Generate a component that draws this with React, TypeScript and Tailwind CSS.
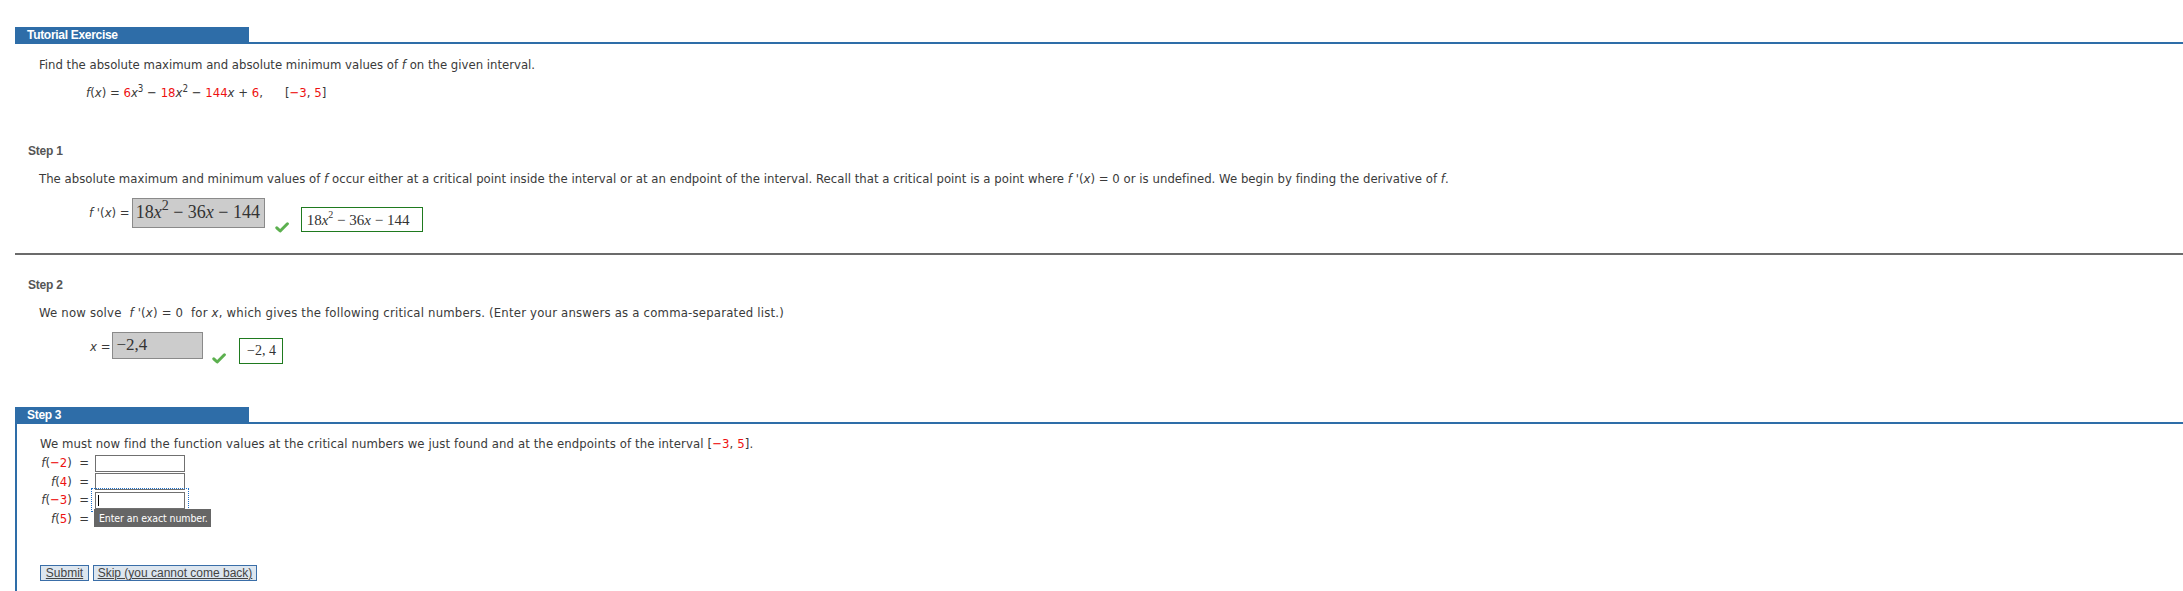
import React from "react";

const F = "font-[family-name:DejaVu_Sans_Condensed,DejaVu_Sans,sans-serif]";
const A = "font-[family-name:Liberation_Sans,Arial,sans-serif]";
const S = "font-[family-name:Liberation_Serif,Times_New_Roman,serif]";

function R({ children }: { children: React.ReactNode }) {
  return <span className="text-[#ee1111]">{children}</span>;
}

function Check() {
  return (
    <svg width="14" height="11" viewBox="0 0 14 11">
      <path
        d="M1.8 5.8 L5.2 9 L12.4 1.8"
        fill="none"
        stroke="#5cb04f"
        strokeWidth="3"
        strokeLinecap="round"
        strokeLinejoin="round"
      />
    </svg>
  );
}

function Header({ title }: { title: string }) {
  return (
    <div className="border-b-2 border-[#2e6da8]">
      <div
        className={`h-[15px] w-[234px] bg-[#2e6da8] pl-[12px] text-[12px] leading-[16px] font-bold tracking-[-0.3px] text-white ${A}`}
      >
        {title}
      </div>
    </div>
  );
}

function StepLabel({ children }: { children: React.ReactNode }) {
  return (
    <div className={`pl-[13px] text-[12px] leading-[16px] font-bold text-[#555555] tracking-[-0.2px] ${A}`}>
      {children}
    </div>
  );
}

function Row({
  label,
  focused,
}: {
  label: React.ReactNode;
  focused?: boolean;
}) {
  return (
    <div className="flex h-[18.5px] items-center">
      <div className="w-[49px] text-right whitespace-nowrap">{label}</div>
      <div className="relative ml-[6px]">
        {focused && (
          <span className="absolute left-[-4px] right-[-4px] top-[-4px] bottom-[-3px] border border-dotted border-[#1e6fc8]" />
        )}
        <div className="relative h-[17px] w-[90px] border border-[#707070] bg-white">
          {focused && <span className="absolute left-[2px] top-[2px] h-[11px] w-[1px] bg-black" />}
        </div>
        {focused && (
          <div
            className={`absolute left-[-1px] top-[17px] z-10 h-[18px] w-[117px] bg-[#666666] pl-[5px] text-[10.5px] leading-[18px] tracking-[-0.1px] whitespace-nowrap text-white ${F}`}
          >
            Enter an exact number.
          </div>
        )}
      </div>
    </div>
  );
}

export default function App() {
  return (
    <div
      className={`h-[591px] overflow-hidden bg-white pt-[27px] pl-[15px] text-[13px] leading-[16px] text-[#3a3a3a] ${F}`}
    >
      <Header title="Tutorial Exercise" />
      <div className="pl-[24px]">
        <p className="mt-[13px]">
          Find the absolute maximum and absolute minimum values of <i>f</i> on the given interval.
        </p>
        <p className="mt-[12px] ml-[47px] whitespace-nowrap">
          <i>f</i>(<i>x</i>) = <R>6</R>
          <i>x</i>
          <sup>3</sup> − <R>18</R>
          <i>x</i>
          <sup>2</sup> − <R>144</R>
          <i>x</i> + <R>6</R>,<span className="ml-[22px]">[<R>−3</R>, <R>5</R>]</span>
        </p>
      </div>

      <div className="mt-[42px]">
        <StepLabel>Step 1</StepLabel>
      </div>
      <div className="pl-[24px]">
        <p className="mt-[12px] whitespace-nowrap tracking-[0.03px]">
          The absolute maximum and minimum values of <i>f</i> occur either at a critical point inside the interval or
          at an endpoint of the interval. Recall that a critical point is a point where <i>f</i> '(<i>x</i>) = 0 or is
          undefined. We begin by finding the derivative of <i>f</i>.
        </p>
        <div className="mt-[11px] flex h-[30px] items-start">
          <span className="ml-[50px] mt-[7px] whitespace-nowrap">
            <i>f</i> '(<i>x</i>) =
          </span>
          <div
            className={`ml-[2px] h-[30px] w-[133px] overflow-hidden border border-[#8a8a8a] bg-[#cccccc] pl-[3px] text-[18px] leading-[27px] whitespace-nowrap text-[#333] ${S}`}
          >
            18<i>x</i>
            <sup className="text-[14px] top-[-0.6em]">2</sup>&nbsp;−&nbsp;36<i>x</i>&nbsp;−&nbsp;144
          </div>
          <div className="ml-[10px] mt-[24px]">
            <Check />
          </div>
          <div
            className={`ml-[12px] mt-[9px] flex h-[25px] w-[122px] items-center border border-[#1f7a1f] pl-[5px] text-[15px] whitespace-nowrap text-[#333] ${S}`}
          >
            18<i>x</i>
            <sup className="text-[10px]">2</sup>&nbsp;−&nbsp;36<i>x</i>&nbsp;−&nbsp;144
          </div>
        </div>
      </div>

      <div className="mt-[25px] h-[2px] bg-[#6b6b6b]" />

      <div className="mt-[22px]">
        <StepLabel>Step 2</StepLabel>
      </div>
      <div className="pl-[24px]">
        <p className="mt-[12px] whitespace-nowrap tracking-[0.2px]">
          We now solve&nbsp; <i>f</i> '(<i>x</i>) = 0&nbsp; for <i>x</i>, which gives the following critical numbers.
          (Enter your answers as a comma-separated list.)
        </p>
        <div className="mt-[11px] flex h-[27px] items-start">
          <span className="ml-[51px] mt-[7px] whitespace-nowrap">
            <i>x</i> =
          </span>
          <div
            className={`ml-[2px] h-[27px] w-[91px] border border-[#8a8a8a] bg-[#cccccc] pl-[3px] pt-[2px] text-[17px] leading-[20px] whitespace-nowrap text-[#333] ${S}`}
          >
            −2,4
          </div>
          <div className="ml-[9px] mt-[21px]">
            <Check />
          </div>
          <div
            className={`ml-[13px] mt-[6px] flex h-[26px] w-[44px] items-center justify-center border border-[#1f7a1f] text-[14px] whitespace-nowrap text-[#333] ${S}`}
          >
            −2, 4
          </div>
        </div>
      </div>

      <div className="mt-[48px]">
        <Header title="Step 3" />
      </div>
      <div className="h-[200px] border-l-2 border-[#2e6da8] pl-[23px] pt-[12px]">
        <p className="whitespace-nowrap tracking-[0.1px]">
          We must now find the function values at the critical numbers we just found and at the endpoints of the
          interval [<R>−3</R>, <R>5</R>].
        </p>
        <div className="mt-[2px] flex flex-col">
          <Row
            label={
              <>
                <i>f</i>(<R>−2</R>) &nbsp;=
              </>
            }
          />
          <Row
            label={
              <>
                <i>f</i>(<R>4</R>) &nbsp;=
              </>
            }
          />
          <Row
            focused
            label={
              <>
                <i>f</i>(<R>−3</R>) &nbsp;=
              </>
            }
          />
          <Row
            label={
              <>
                <i>f</i>(<R>5</R>) &nbsp;=
              </>
            }
          />
        </div>
        <div className={`mt-[37px] flex gap-[4px] text-[12px] text-[#444] ${A}`}>
          <button className="h-[16px] w-[49px] border-[1.5px] border-[#3a6ea8] bg-[#dde6ef] leading-[12px] underline">
            Submit
          </button>
          <button className="h-[16px] w-[164px] border-[1.5px] border-[#3a6ea8] bg-[#dde6ef] leading-[12px] underline">
            Skip (you cannot come back)
          </button>
        </div>
      </div>
    </div>
  );
}
